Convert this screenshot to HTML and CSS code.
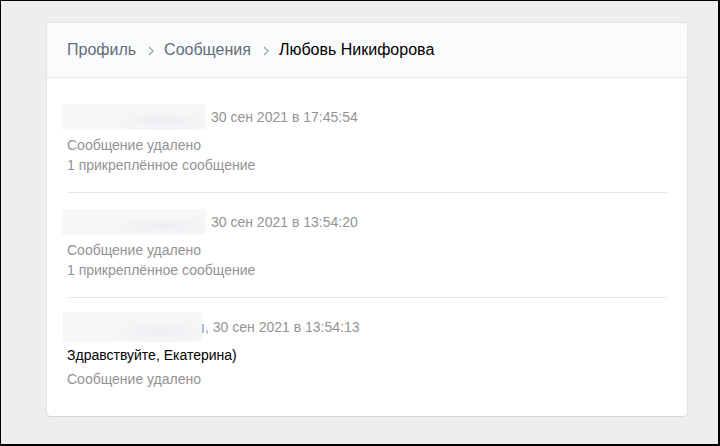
FILE: index.html
```html
<!DOCTYPE html>
<html lang="ru">
<head>
    <meta charset="UTF-8">
    <meta name="viewport" content="width=device-width, initial-scale=1.0">
    <title>Сообщения</title>
    <link rel="stylesheet" href="styles.css">
</head>
<body>
    <div class="page">
        <div class="card">
            <div class="crumbs">
                <a class="crumb" href="#">Профиль</a>
                <svg class="sep" width="6" height="10" viewBox="0 0 6 10"><path d="M1 1l4 4-4 4" fill="none" stroke="#a3a9b1" stroke-width="1.4"/></svg>
                <a class="crumb" href="#">Сообщения</a>
                <svg class="sep" width="6" height="10" viewBox="0 0 6 10"><path d="M1 1l4 4-4 4" fill="none" stroke="#a3a9b1" stroke-width="1.4"/></svg>
                <span class="crumb current">Любовь Никифорова</span>
            </div>
            <div class="msg-list">
                <!-- имена скрыты -->
                <div class="msg">
                    <div class="msg-head">
                        <div class="hidden-name"></div>
                        <span class="date">30 сен 2021 в 17:45:54</span>
                    </div>
                    <div class="line muted">Сообщение удалено</div>
                    <div class="line muted">1 прикреплённое сообщение</div>
                </div>
                <div class="msg">
                    <div class="msg-head">
                        <div class="hidden-name"></div>
                        <span class="date">30 сен 2021 в 13:54:20</span>
                    </div>
                    <div class="line muted">Сообщение удалено</div>
                    <div class="line muted">1 прикреплённое сообщение</div>
                </div>
                <div class="msg">
                    <div class="msg-head">
                        <div class="hidden-name short"></div>
                        <span class="name-tail"></span><span class="date">, 30 сен 2021 в 13:54:13</span>
                    </div>
                    <div class="line text">Здравствуйте, Екатерина)</div>
                    <div class="line muted">Сообщение удалено</div>
                </div>
            </div>
        </div>
    </div>
</body>
</html>
```
FILE: styles.css
```css
html, body {
    margin: 0;
    padding: 0;
}
body {
    font-family: "Liberation Sans", Arial, sans-serif;
    background: #edeef0;
    height: 446px;
    box-sizing: border-box;
    border: 1px solid #000;
    border-right-width: 2px;
    border-bottom-width: 2px;
    overflow: hidden;
}
.page {
    padding: 22px 0 0 46px;
}
.card {
    width: 640px;
    background: #fff;
    border-radius: 4px;
    box-shadow: 0 1px 0 0 #d7d8db, 0 0 0 1px #e3e4e8;
    overflow: hidden;
}
.crumbs {
    display: flex;
    align-items: center;
    height: 54px;
    padding: 0 20px;
    background: #fafbfc;
    border-bottom: 1px solid #e7e8ec;
    font-size: 16px;
    line-height: 20px;
}
.crumb {
    color: #626d7a;
    text-decoration: none;
}
.crumb.current {
    color: #000;
}
.sep {
    margin: 1px 10px 0 12px;
}
.msg-list {
    padding: 10px 20px 10px 20px;
}
.msg {
    padding: 16px 0 17px 0;
    border-bottom: 1px solid #e7e8ec;
    font-size: 14px;
}
.msg:last-child {
    border-bottom: none;
}
.msg-head {
    display: flex;
    align-items: center;
    height: 26px;
    margin-bottom: 5px;
}
.hidden-name {
    width: 144px;
    height: 26px;
    margin: 0 5px 0 -5px;
    background: radial-gradient(ellipse 40% 45% at 70% 65%, #eceef1 0, #f3f4f6 60%, rgba(246,247,249,0) 100%), #f6f7f9;
}
.hidden-name.short {
    width: 139px;
    height: 30px;
    margin: 0 0 0 -4px;
}
.name-tail {
    display: inline-block;
    width: 2px;
    height: 9px;
    margin: 3px 1px 0 0;
    background: #a9bdd3;
}
.date {
    color: #939393;
    line-height: 20px;
}
.line {
    line-height: 20px;
}
.muted {
    color: #939393;
}
.text {
    color: #000;
    margin-bottom: 4px;
}
```
